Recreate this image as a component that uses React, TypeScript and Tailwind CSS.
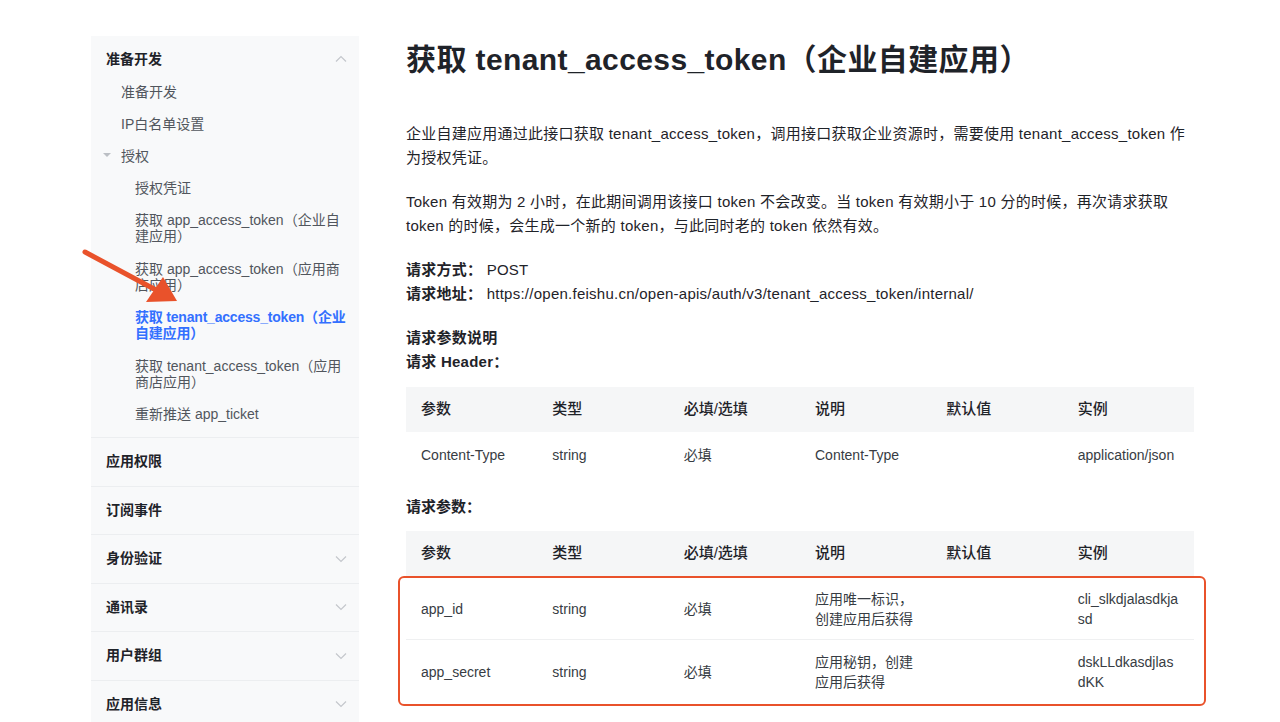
import React from 'react';

const font = '"Liberation Sans", "Noto Sans CJK SC", sans-serif';

// Small chevron used on the sidebar section rows
const Chevron = ({ up = false }: { up?: boolean }) => (
  <svg width="12" height="8" viewBox="0 0 12 8" className="-mr-[3px]">
    <path
      d={up ? 'M1 6.5 L6 1.5 L11 6.5' : 'M1 1.5 L6 6.5 L11 1.5'}
      fill="none"
      stroke="#c4c7cc"
      strokeWidth="1.2"
    />
  </svg>
);

interface NavItem {
  label: React.ReactNode;
  level: 1 | 2;
  active?: boolean;
  twoLine?: boolean;
  caret?: boolean;
}

const navItems: NavItem[] = [
  { label: '准备开发', level: 1 },
  { label: 'IP白名单设置', level: 1 },
  { label: '授权', level: 1, caret: true },
  { label: '授权凭证', level: 2 },
  { label: <>获取 app_access_token（企业自<br />建应用）</>, level: 2, twoLine: true },
  { label: <>获取 app_access_token（应用商<br />店应用）</>, level: 2, twoLine: true },
  { label: <>获取 tenant_access_token（企业<br />自建应用）</>, level: 2, twoLine: true, active: true },
  { label: <>获取 tenant_access_token（应用<br />商店应用）</>, level: 2, twoLine: true },
  { label: '重新推送 app_ticket', level: 2 },
];

const sections = [
  { label: '应用权限', chevron: false },
  { label: '订阅事件', chevron: false },
  { label: '身份验证', chevron: true },
  { label: '通讯录', chevron: true },
  { label: '用户群组', chevron: true },
  { label: '应用信息', chevron: true },
];

const headers = ['参数', '类型', '必填/选填', '说明', '默认值', '实例'];

const Sidebar = () => (
  <aside className="w-[268px] shrink-0 bg-[#f8f9fa] self-start">
    <div className="h-[40px] pt-[13px] px-[15px] flex justify-between items-start">
      <span className="text-[14px] leading-5 font-semibold text-[#1f2329]">准备开发</span>
      <div className="h-5 flex items-center">
        <Chevron up />
      </div>
    </div>
    <div className="pb-[7px]">
      {navItems.map((item, i) => (
        <div
          key={i}
          className={`relative flex items-center text-[14px] ${
            item.twoLine ? 'h-[48.5px] leading-4' : 'h-8 leading-5'
          } ${item.level === 1 ? 'pl-[30px]' : 'pl-[44px]'} ${
            item.active ? 'text-[#3370ff] font-semibold tracking-[-0.2px]' : 'text-[#51565d]'
          }`}
        >
          {item.caret && (
            <span className="absolute left-[12px] top-[13px] w-0 h-0 border-l-[4px] border-r-[4px] border-t-[4px] border-l-transparent border-r-transparent border-t-[#bbbfc4]" />
          )}
          <span>{item.label}</span>
        </div>
      ))}
    </div>
    {sections.map((s) => (
      <div
        key={s.label}
        className="h-[48.5px] border-t border-[#eceef0] px-[15px] flex items-center justify-between"
      >
        <span className="text-[14px] font-semibold text-[#1f2329]">{s.label}</span>
        {s.chevron && <Chevron />}
      </div>
    ))}
  </aside>
);

const HeaderRow = () => (
  <div className="grid grid-cols-6 h-[45px] items-center bg-[#f5f6f7]">
    {headers.map((h) => (
      <div key={h} className="px-[15px] text-[15px] font-medium text-[#1f2329]">
        {h}
      </div>
    ))}
  </div>
);

const Cell = ({ children }: { children?: React.ReactNode }) => (
  <div className="px-[15px] text-[14px] leading-5 text-[#373c43] break-all">{children}</div>
);

const Main = () => (
  <main className="w-[788px] ml-[47px] text-[#1f2329]">
    <h1 className="mt-1 text-[30px] leading-[40px] font-bold text-[#1f2329] whitespace-nowrap tracking-[0.4px]">
      获取 tenant_access_token（企业自建应用）
    </h1>
    <div className="tracking-[0.25px]">
      <p className="mt-[42px] text-[15px] leading-6">
        企业自建应用通过此接口获取 tenant_access_token，调用接口获取企业资源时，需要使用 tenant_access_token 作
        <br />
        为授权凭证。
      </p>
      <p className="mt-5 text-[15px] leading-6">
        Token 有效期为 2 小时，在此期间调用该接口 token 不会改变。当 token 有效期小于 10 分的时候，再次请求获取
        <br />
        token 的时候，会生成一个新的 token，与此同时老的 token 依然有效。
      </p>
      <div className="mt-5 text-[15px] leading-6">
        <div>
          <span className="font-semibold">请求方式：</span> POST
        </div>
        <div>
          <span className="font-semibold">请求地址：</span>{' '}
          https://open.feishu.cn/open-apis/auth/v3/tenant_access_token/internal/
        </div>
      </div>
      <div className="mt-5 text-[15px] leading-6 font-semibold">
        <div>请求参数说明</div>
        <div>请求 Header：</div>
      </div>
    </div>

    <div className="mt-[13px]">
      <HeaderRow />
      <div className="grid grid-cols-6 h-[46px] items-center">
        <Cell>Content-Type</Cell>
        <Cell>string</Cell>
        <Cell>必填</Cell>
        <Cell>Content-Type</Cell>
        <Cell />
        <Cell>application/json</Cell>
      </div>
    </div>

    <div className="mt-[17px] text-[15px] leading-6 font-semibold">请求参数：</div>

    <div className="mt-3">
      <HeaderRow />
      <div className="-ml-2 -mr-3 pl-[6px] pr-[10px] border-2 border-[#e9522b] rounded-[6px]">
        <div className="grid grid-cols-6 h-[62px] items-center border-b border-[#eff0f1]">
          <Cell>app_id</Cell>
          <Cell>string</Cell>
          <Cell>必填</Cell>
          <Cell>
            应用唯一标识，
            <br />
            创建应用后获得
          </Cell>
          <Cell />
          <Cell>cli_slkdjalasdkjasd</Cell>
        </div>
        <div className="grid grid-cols-6 h-[64px] items-center">
          <Cell>app_secret</Cell>
          <Cell>string</Cell>
          <Cell>必填</Cell>
          <Cell>
            应用秘钥，创建
            <br />
            应用后获得
          </Cell>
          <Cell />
          <Cell>dskLLdkasdjlasdKK</Cell>
        </div>
      </div>
    </div>
  </main>
);

// Annotation arrow drawn over the sidebar
const Arrow = () => (
  <svg
    className="absolute left-0 top-0 pointer-events-none"
    width="1280"
    height="722"
    viewBox="0 0 1280 722"
  >
    <line x1="85" y1="252" x2="156" y2="290" stroke="#e9522b" strokeWidth="5" strokeLinecap="round" />
    <polygon points="177,301 146,302 163,277" fill="#e9522b" />
  </svg>
);

export default function App() {
  return (
    <div
      className="relative w-[1280px] h-[722px] overflow-hidden bg-white flex pl-[91px] pt-[36px]"
      style={{ fontFamily: font }}
    >
      <Sidebar />
      <Main />
      <Arrow />
    </div>
  );
}
